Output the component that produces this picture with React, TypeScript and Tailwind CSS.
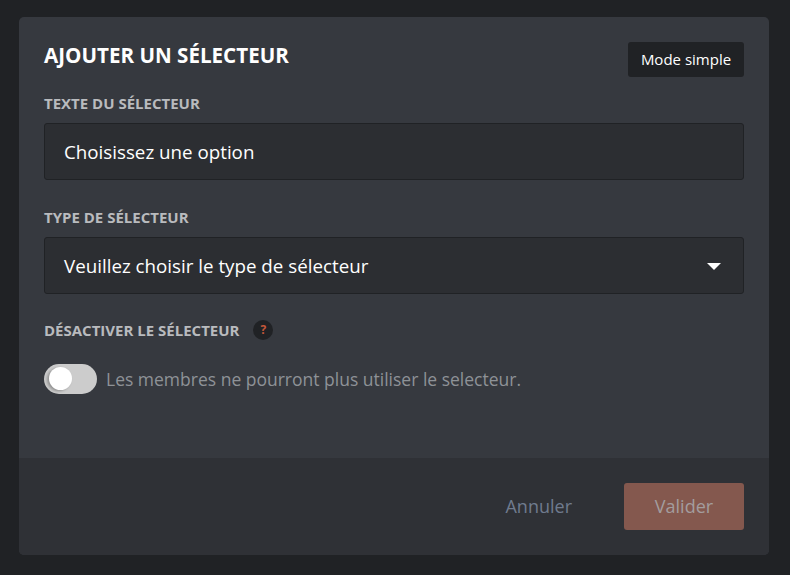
import React from 'react';

const Label = ({ children }: { children: React.ReactNode }) => (
  <span className="text-[15px] leading-[20px] font-bold uppercase text-[#b9bbbe]">{children}</span>
);

export default function App() {
  return (
    <div className="h-[575px] w-[790px] overflow-hidden bg-[#202225] pt-[17px] pl-[19px] font-['Open_Sans',sans-serif]">
      <div className="flex h-[538px] w-[750px] flex-col overflow-hidden rounded-[5px] bg-[#36393f]">
        <div className="flex-1 px-[25px] pt-[25px]">
          <div className="flex items-start justify-between">
            <h1 className="text-[20.6px] leading-[27px] font-bold text-white">AJOUTER UN SÉLECTEUR</h1>
            <button className="h-[35px] w-[116px] rounded-[3px] bg-[#202225] text-[15px] text-white">Mode simple</button>
          </div>

          <div className="mt-[14px]">
            <Label>TEXTE DU SÉLECTEUR</Label>
          </div>
          <div className="mt-[8px] flex h-[57px] items-center rounded-[3px] border border-[#202225] bg-[#2c2e32] pt-[2px] pl-[19px] text-[18.75px] text-white">
            Choisissez une option
          </div>

          <div className="mt-[25px]">
            <Label>TYPE DE SÉLECTEUR</Label>
          </div>
          <div className="mt-[8px] flex h-[57px] items-center justify-between rounded-[3px] border border-[#202225] bg-[#2c2e32] pt-[2px] pr-[22px] pl-[19px] text-[18.75px] text-white">
            <span>Veuillez choisir le type de sélecteur</span>
            <svg width="14" height="7" viewBox="0 0 14 7">
              <path d="M0 0h14L7 7z" fill="#fff" />
            </svg>
          </div>

          <div className="mt-[26px] flex items-center gap-[14px]">
            <Label>DÉSACTIVER LE SÉLECTEUR</Label>
            <span className="flex h-[20px] w-[20px] items-center justify-center rounded-full bg-[#202225] text-[12px] font-bold text-[#c4573a]">?</span>
          </div>

          <div className="mt-[24px] flex items-center gap-[9px]">
            <div className="relative h-[30px] w-[53px] rounded-full bg-[#cccccc]">
              <div className="absolute top-[3px] left-[5px] h-[23px] w-[23px] rounded-full bg-white shadow-[-2px_1px_3px_rgba(0,0,0,0.3)]" />
            </div>
            <span className="text-[17.5px] text-[#8e9297]">Les membres ne pourront plus utiliser le selecteur.</span>
          </div>
        </div>

        <div className="flex h-[97px] items-center justify-end gap-[52px] bg-[#2f3136] px-[25px]">
          <button className="text-[18px] text-[#6f7b8e]">Annuler</button>
          <button className="h-[47px] w-[120px] rounded-[3px] bg-[#84584e] text-[18px] text-[#a39d9e]">Valider</button>
        </div>
      </div>
    </div>
  );
}
